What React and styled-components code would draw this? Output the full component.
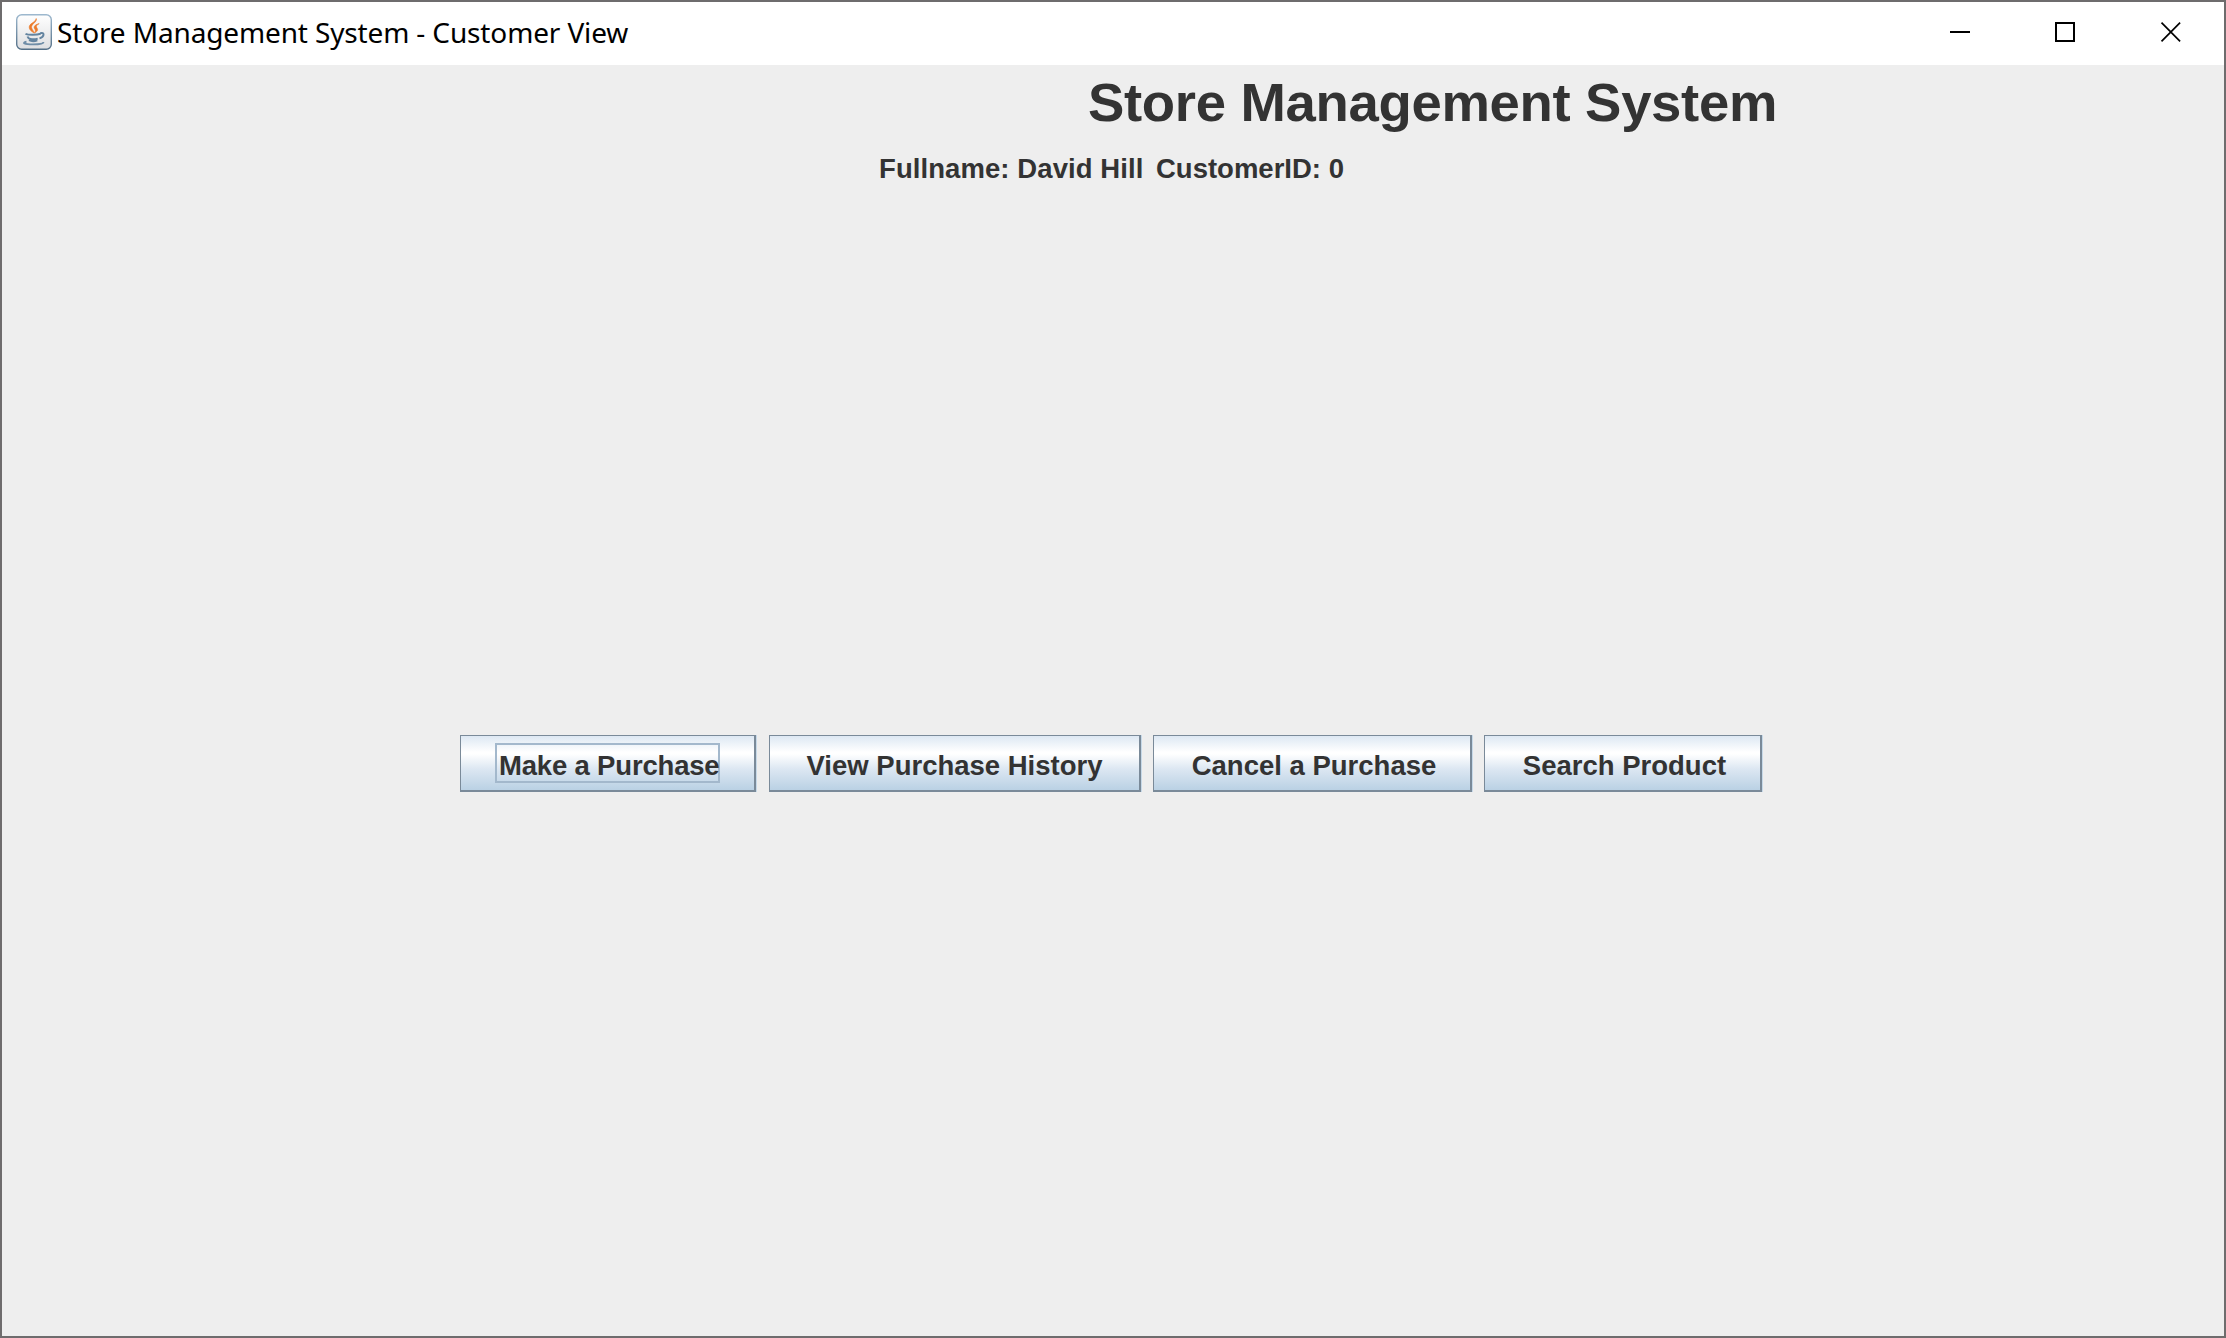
import React from 'react';
import styled, { createGlobalStyle } from 'styled-components';

const GlobalStyle = createGlobalStyle`
  body { margin: 0; background: #eeeeee; }
`;

const Window = styled.main`
  box-sizing: border-box;
  width: 2226px;
  height: 1338px;
  border: 2px solid #6e6c6d;
  background: #eeeeee;
  color: #333333;
  font-family: "Liberation Sans", Arial, sans-serif;
  display: flex;
  flex-direction: column;
  overflow: hidden;
`;

const TitleBar = styled.header`
  height: 63px;
  flex: none;
  box-sizing: border-box;
  padding: 0 2px 0 14px;
  background: #ffffff;
  color: #000000;
  display: flex;
  align-items: center;
`;

const AppIcon = styled.svg`
  width: 36px;
  height: 36px;
  flex: none;
  margin-bottom: 3px;
`;

const WindowTitle = styled.span`
  flex: 1;
  margin: 0 0 4px 5px;
  font-family: "Noto Sans", "Open Sans", sans-serif;
  font-size: 28px;
  line-height: 38px;
  letter-spacing: ${(p) => p.$spacing}px;
  white-space: nowrap;
`;

const Controls = styled.div`
  display: flex;
  height: 63px;
`;

const Control = styled.div`
  width: 105px;
  display: flex;
  align-items: center;
  justify-content: center;
  padding: 0 0 3px 1px;
  box-sizing: border-box;
  svg { display: block; width: 20px; height: 20px; overflow: visible; }
`;

const Heading = styled.h1`
  margin: 7px 0 0 1086px;
  height: 62px;
  font-size: 54.5px;
  line-height: 62px;
  font-weight: bold;
  letter-spacing: ${(p) => p.$spacing}px;
  white-space: nowrap;
`;

const Details = styled.div`
  display: flex;
  gap: 11px;
  margin: 19px 0 0 877px;
  height: 32px;
`;

const Label = styled.span`
  width: ${(p) => p.$width}px;
  font-size: 27.5px;
  line-height: 32px;
  font-weight: bold;
  letter-spacing: ${(p) => p.$spacing || 0}px;
  white-space: nowrap;
`;

const Actions = styled.nav`
  display: flex;
  gap: 12px;
  margin: 550px 0 0 458px;
`;

const ActionButton = styled.button`
  box-sizing: border-box;
  width: ${(p) => p.$width}px;
  height: 57px;
  margin: 0 ${(p) => p.$after || 0}px 0 0;
  padding: 5px 0 0 ${(p) => p.$inset || 0}px;
  border: solid #7a8a99;
  border-width: 1px 2px 2px 1px;
  border-radius: 0;
  box-shadow: 1px 0 0 #c7d9e8;
  background: linear-gradient(#dde8f3 0, #ffffff 16px, #ffffff 18px, #dce7f2 33px, #bad1e4 100%);
  color: #333333;
  font-family: inherit;
  font-size: 27.5px;
  line-height: 32px;
  font-weight: bold;
  letter-spacing: ${(p) => p.$spacing || 0}px;
  display: flex;
  align-items: center;
  justify-content: center;
  white-space: nowrap;
`;

const Focus = styled.span`
  box-sizing: border-box;
  width: 225px;
  height: 40px;
  margin-top: -6px;
  padding: 5px 0 0 2px;
  border: 2px solid #a3b8cc;
  text-align: left;
`;

function JavaIcon() {
  return (
    <AppIcon viewBox="0 0 36 36" fill="none">
      <defs>
        <linearGradient id="face" x1="0" y1="0" x2="0" y2="1">
          <stop offset="0" stopColor="#ffffff" />
          <stop offset="1" stopColor="#dedfe1" />
        </linearGradient>
        <linearGradient id="edge" x1="0" y1="0" x2="0" y2="1">
          <stop offset="0" stopColor="#9db8ce" />
          <stop offset="1" stopColor="#536f87" />
        </linearGradient>
      </defs>
      <rect x=".7" y=".7" width="34.6" height="34.6" rx="5" fill="url(#face)" stroke="url(#edge)" strokeWidth="1.4" />
      <path d="M20.200 4.500c1.600 3.400-5.400 5.500-4.600 9.200.4 2 2.400 3.300 2.600 5.300-3.400-1.800-5.600-4-4.800-6.900C14.200 9 19.800 8.200 20.200 4.500Z" fill="#ec7a2a" stroke="#ec7a2a" strokeWidth=".6" />
      <path d="M23.200 9.600c-4.800 1.200-6 3.400-4.400 5.400 1 1.400.8 2.700-.4 4 4.600-2.200 3.200-4 2.300-5.400-.9-1.500.1-2.500 2.500-4Z" fill="#ec7a2a" stroke="#ec7a2a" strokeWidth=".6" />
      <path d="M9.500 19.800c3 1.400 11.500 1.200 15-.1M11.500 22.500c.5 1.500 1.500 2.300 3 2.600 2.700.5 5 .3 7.200-.5M13 26.200c2.500 1.200 6 1 8.300.1M24.300 19.200c4.400-1.300 4.400 3.600-.8 5.200" stroke="#6384a0" strokeWidth="2" />
      <path d="M10.500 27.600c-4.800 1.300-2.500 2.800 6.500 2.800 7.200 0 10.500-1 10.500-2.400" stroke="#6f8da7" strokeWidth="1.900" />
    </AppIcon>
  );
}

export default function App() {
  return (
    <>
      <GlobalStyle />
      <Window>
        <TitleBar>
          <JavaIcon />
          <WindowTitle $spacing={-0.14}>Store Management System - Customer View</WindowTitle>
          <Controls>
            <Control>
              <svg viewBox="0 0 20 20"><path d="M0 10h20" stroke="#000" strokeWidth="2" /></svg>
            </Control>
            <Control>
              <svg viewBox="0 0 20 20"><path d="M1 1h18v18H1Z" fill="none" stroke="#000" strokeWidth="2" /></svg>
            </Control>
            <Control>
              <svg viewBox="0 0 20 20"><path d="M1.500.700l18.600 18.600m0-18.600L1.500 19.300" stroke="#000" strokeWidth="1.700" /></svg>
            </Control>
          </Controls>
        </TitleBar>
        <Heading $spacing={-0.33}>Store Management System</Heading>
        <Details>
          <Label $width={266} $spacing={0.08}>Fullname: David Hill</Label>
          <Label $width={190}>CustomerID: 0</Label>
        </Details>
        <Actions>
          <ActionButton $width={296} $after={1} $spacing={-0.18}><Focus>Make a Purchase</Focus></ActionButton>
          <ActionButton $width={372}>View Purchase History</ActionButton>
          <ActionButton $width={319} $inset={4}>Cancel a Purchase</ActionButton>
          <ActionButton $width={278} $inset={4}>Search Product</ActionButton>
        </Actions>
      </Window>
    </>
  );
}
